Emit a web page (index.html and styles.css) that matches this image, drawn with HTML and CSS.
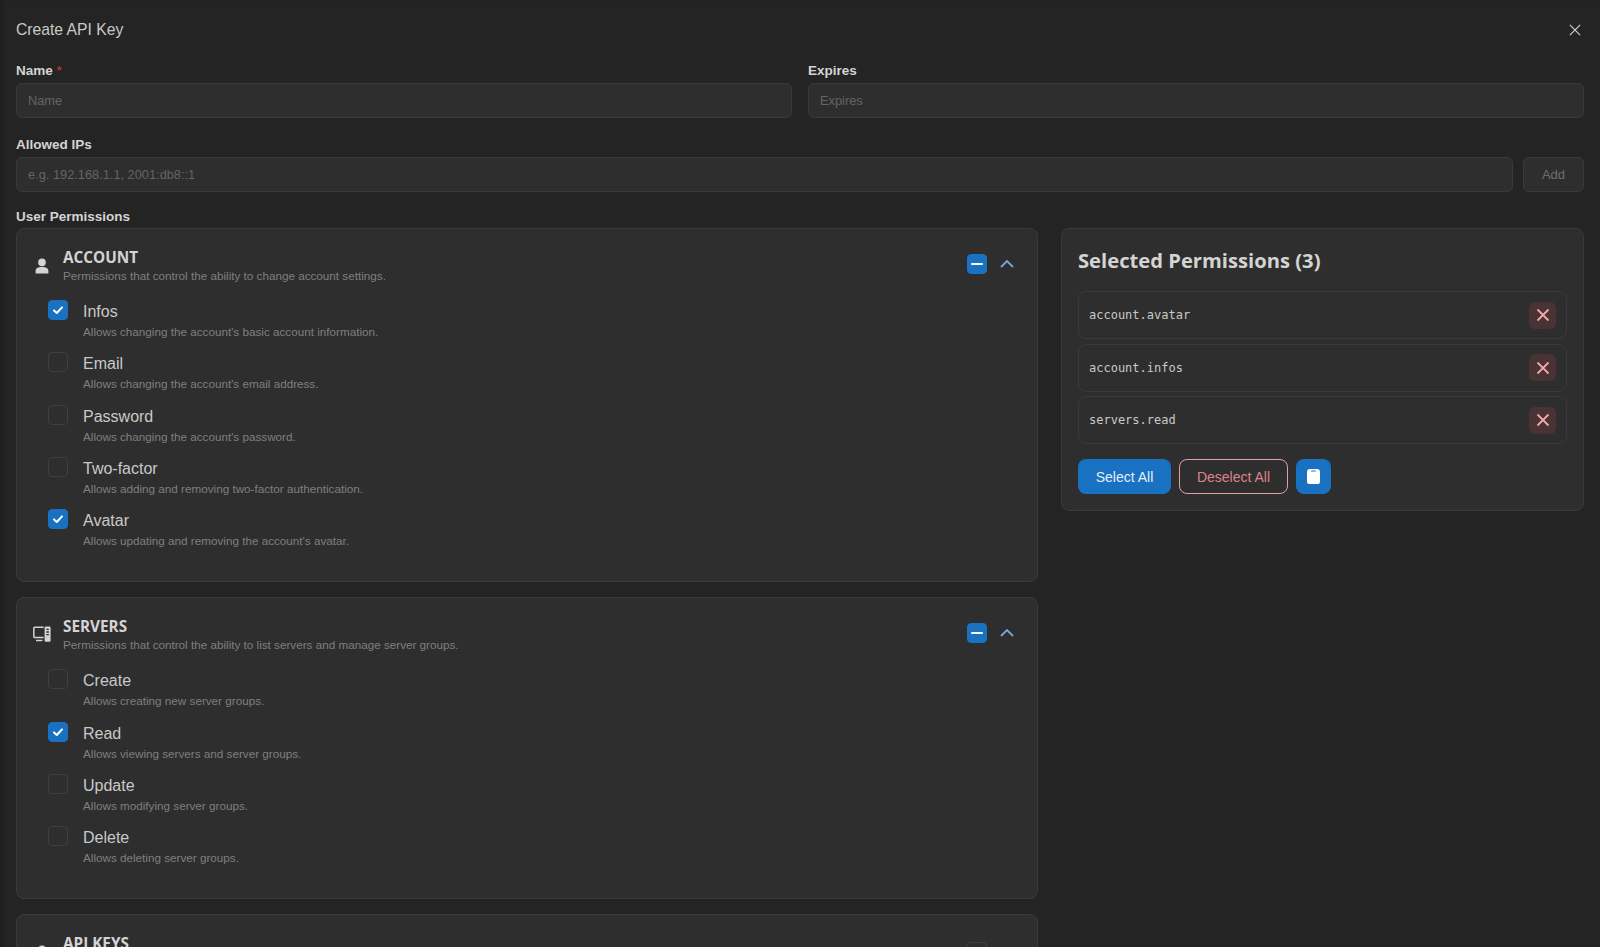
FILE: index.html
```html
<!DOCTYPE html>
<html lang="en">
<head>
    <meta charset="UTF-8">
    <title>Create API Key</title>
    <link rel="stylesheet" href="styles.css">
</head>
<body>
    <div class="modal">
        <div class="modal-header">
            <span class="modal-title">Create API Key</span>
            <svg class="close-icon" viewBox="0 0 14 14"><path d="M1 1 L13 13 M13 1 L1 13"/></svg>
        </div>

        <div class="field-row">
            <div class="field">
                <label class="field-label">Name <span class="required">*</span></label>
                <input class="text-input" type="text" placeholder="Name">
            </div>
            <div class="field">
                <label class="field-label">Expires</label>
                <input class="text-input" type="text" placeholder="Expires">
            </div>
        </div>

        <div class="field ip-field">
            <label class="field-label">Allowed IPs</label>
            <div class="ip-row">
                <input class="text-input" type="text" placeholder="e.g. 192.168.1.1, 2001:db8::1">
                <button class="add-button">Add</button>
            </div>
        </div>

        <div class="field-label permissions-label">User Permissions</div>
        <div class="permissions">
            <div class="groups">
                <!-- account -->
                <div class="group">
                    <div class="group-head">
                        <svg class="group-icon" viewBox="0 0 18 18"><circle cx="9" cy="5.4" r="3.8"/><path d="M2.6 16.5 V14 C2.6 11.4 5 10 9 10 C13 10 15.4 11.4 15.4 14 V16.5 Z"/></svg>
                        <div class="group-text">
                            <div class="group-title">ACCOUNT</div>
                            <div class="desc">Permissions that control the ability to change account settings.</div>
                        </div>
                        <span class="checkbox checked"><svg viewBox="0 0 20 20"><path class="minus" d="M5 10 H15"/></svg></span>
                        <svg class="chevron" viewBox="0 0 16 10"><path d="M2 8 L8 2 L14 8"/></svg>
                    </div>
                    <div class="perm">
                        <span class="checkbox checked"><svg viewBox="0 0 20 20"><path class="tick" d="M6 10.4 L8.8 13 L14 7.4"/></svg></span>
                        <div><div class="perm-name">Infos</div><div class="desc">Allows changing the account's basic account information.</div></div>
                    </div>
                    <div class="perm">
                        <span class="checkbox"></span>
                        <div><div class="perm-name">Email</div><div class="desc">Allows changing the account's email address.</div></div>
                    </div>
                    <div class="perm">
                        <span class="checkbox"></span>
                        <div><div class="perm-name">Password</div><div class="desc">Allows changing the account's password.</div></div>
                    </div>
                    <div class="perm">
                        <span class="checkbox"></span>
                        <div><div class="perm-name">Two-factor</div><div class="desc">Allows adding and removing two-factor authentication.</div></div>
                    </div>
                    <div class="perm">
                        <span class="checkbox checked"><svg viewBox="0 0 20 20"><path class="tick" d="M6 10.4 L8.8 13 L14 7.4"/></svg></span>
                        <div><div class="perm-name">Avatar</div><div class="desc">Allows updating and removing the account's avatar.</div></div>
                    </div>
                </div>

                <!-- servers -->
                <div class="group">
                    <div class="group-head">
                        <svg class="group-icon" viewBox="0 0 18 18"><path class="outline" d="M10.6 1.2 H1.8 A1 1 0 0 0 0.8 2.2 V10.4 A1 1 0 0 0 1.8 11.4 H10.6 M3 14.4 H9.4"/><rect x="11.6" y="0.6" width="6" height="15.2" rx="1.2"/><path class="notch" d="M13.4 3.4 H15.8 M13.4 6 H15.8 M13.4 8.6 H15.8"/></svg>
                        <div class="group-text">
                            <div class="group-title">SERVERS</div>
                            <div class="desc">Permissions that control the ability to list servers and manage server groups.</div>
                        </div>
                        <span class="checkbox checked"><svg viewBox="0 0 20 20"><path class="minus" d="M5 10 H15"/></svg></span>
                        <svg class="chevron" viewBox="0 0 16 10"><path d="M2 8 L8 2 L14 8"/></svg>
                    </div>
                    <div class="perm">
                        <span class="checkbox"></span>
                        <div><div class="perm-name">Create</div><div class="desc">Allows creating new server groups.</div></div>
                    </div>
                    <div class="perm">
                        <span class="checkbox checked"><svg viewBox="0 0 20 20"><path class="tick" d="M6 10.4 L8.8 13 L14 7.4"/></svg></span>
                        <div><div class="perm-name">Read</div><div class="desc">Allows viewing servers and server groups.</div></div>
                    </div>
                    <div class="perm">
                        <span class="checkbox"></span>
                        <div><div class="perm-name">Update</div><div class="desc">Allows modifying server groups.</div></div>
                    </div>
                    <div class="perm">
                        <span class="checkbox"></span>
                        <div><div class="perm-name">Delete</div><div class="desc">Allows deleting server groups.</div></div>
                    </div>
                </div>

                <!-- api keys, cut off by the window -->
                <div class="group">
                    <div class="group-head">
                        <svg class="group-icon" viewBox="0 0 18 18"><circle cx="9" cy="5.4" r="3.8"/><path d="M2.6 16.5 V14 C2.6 11.4 5 10 9 10 C13 10 15.4 11.4 15.4 14 V16.5 Z"/></svg>
                        <div class="group-text tall">
                            <div class="group-title">API KEYS</div>
                        </div>
                        <span class="checkbox"></span>
                    </div>
                </div>
            </div>

            <div class="selected">
                <h2 class="selected-title">Selected Permissions (3)</h2>
                <div class="selected-list">
                    <div class="selected-item">
                        <span class="perm-code">account.avatar</span>
                        <span class="remove"><svg viewBox="0 0 14 14"><path d="M1.5 1.5 L12.5 12.5 M12.5 1.5 L1.5 12.5"/></svg></span>
                    </div>
                    <div class="selected-item">
                        <span class="perm-code">account.infos</span>
                        <span class="remove"><svg viewBox="0 0 14 14"><path d="M1.5 1.5 L12.5 12.5 M12.5 1.5 L1.5 12.5"/></svg></span>
                    </div>
                    <div class="selected-item">
                        <span class="perm-code">servers.read</span>
                        <span class="remove"><svg viewBox="0 0 14 14"><path d="M1.5 1.5 L12.5 12.5 M12.5 1.5 L1.5 12.5"/></svg></span>
                    </div>
                </div>
                <div class="actions">
                    <button class="btn btn-primary">Select All</button>
                    <button class="btn btn-outline">Deselect All</button>
                    <button class="btn btn-icon"><svg viewBox="0 0 13 15"><path fill-rule="evenodd" d="M3 0 H10 A3 3 0 0 1 13 3 V13 A2 2 0 0 1 11 15 H2 A2 2 0 0 1 0 13 V3 A3 3 0 0 1 3 0 Z M4.6 1.4 A0.6 0.6 0 0 0 4.6 2.6 H8.4 A0.6 0.6 0 0 0 8.4 1.4 Z"/></svg></button>
                </div>
            </div>
        </div>
    </div>
</body>
</html>
```

FILE: styles.css
```css
html, body {
    height: 100%;
}
body {
    margin: 0;
    background: #242424;
    color: #d4d4d4;
    font-family: "Liberation Sans", Arial, sans-serif;
    overflow: hidden;
}
.modal {
    height: 947px;
    box-sizing: border-box;
    padding: 0 16px;
    overflow: hidden;
    box-shadow: inset 5px 0 6px -4px #1a1a1a;
}
.modal-header {
    display: flex;
    align-items: center;
    justify-content: space-between;
    height: 61px;
    padding-bottom: 2px;
    box-sizing: border-box;
}
.modal-title {
    font-size: 15.7px;
    color: #c9c9c9;
}
.close-icon {
    width: 12px;
    height: 12px;
    margin-right: 3px;
    fill: none;
    stroke: #c9c9c9;
    stroke-width: 1.5;
}

/* form fields */
.field-row {
    display: grid;
    grid-template-columns: 1fr 1fr;
    gap: 16px;
}
.field-label {
    display: block;
    font-size: 13.5px;
    font-weight: 700;
    line-height: 20px;
    color: #d4d4d4;
}
.required {
    color: #e03131;
    font-weight: 400;
}
.text-input {
    display: block;
    width: 100%;
    height: 35px;
    margin-top: 2px;
    padding: 0 11px;
    box-sizing: border-box;
    background: #2e2e2e;
    border: 1px solid #3a3a3a;
    border-radius: 6px;
    font-family: inherit;
    font-size: 12.8px;
    color: #d4d4d4;
    outline: none;
}
.text-input::placeholder {
    color: #646464;
}
.ip-field {
    margin-top: 17px;
}
.ip-row {
    display: flex;
    gap: 10px;
    align-items: flex-end;
}
.ip-row .text-input {
    flex: 1;
}
.add-button {
    width: 61px;
    height: 35px;
    background: #2e2e2e;
    border: 1px solid #3a3a3a;
    border-radius: 6px;
    font-family: inherit;
    font-size: 13px;
    color: #6e6e6e;
}
.permissions-label {
    margin-top: 15px;
}
.permissions {
    display: grid;
    grid-template-columns: 1022px 523px;
    gap: 23px;
    align-items: start;
    margin-top: 1px;
}

/* permission groups */
.groups {
    display: flex;
    flex-direction: column;
    gap: 15px;
}
.group {
    background: #2e2e2e;
    border: 1px solid #3a3a3a;
    border-radius: 8px;
    padding: 18px 22px 18px 16px;
}
.group-head {
    display: flex;
    align-items: center;
    margin-bottom: 18px;
}
.group-icon {
    width: 18px;
    height: 18px;
    margin-right: 12px;
    fill: #d4d4d4;
    flex-shrink: 0;
}
.group-icon .outline {
    fill: none;
    stroke: #d4d4d4;
    stroke-width: 1.5;
}
.group-icon .notch {
    fill: none;
    stroke: #2e2e2e;
    stroke-width: 1.3;
}
.group-text {
    flex: 1;
}
.group-text.tall {
    min-height: 40px;
}
.group-text.tall + .checkbox {
    margin-right: 28px;
}
.group-title {
    font-family: "Open Sans", sans-serif;
    font-size: 15.3px;
    font-weight: 700;
    line-height: 20px;
    margin-bottom: 1px;
    color: #d4d4d4;
}
.desc {
    font-size: 11.7px;
    line-height: 16px;
    color: #7f7f7f;
}
.checkbox {
    display: block;
    width: 20px;
    height: 20px;
    box-sizing: border-box;
    border: 1px solid #3f3f3f;
    border-radius: 4px;
    flex-shrink: 0;
}
.group-head .checkbox {
    margin-bottom: 3px;
}
.checkbox.checked {
    background: #1971c2;
    border-color: #1971c2;
}
.checkbox svg {
    display: block;
    width: 20px;
    height: 20px;
    margin: -1px;
    fill: none;
    stroke: #fff;
    stroke-width: 2;
    stroke-linecap: round;
    stroke-linejoin: round;
}
.chevron {
    width: 16px;
    height: 10px;
    margin-left: 12px;
    margin-bottom: 4px;
    fill: none;
    stroke: #74a9d8;
    stroke-width: 1.8;
}
.perm {
    display: flex;
    gap: 15px;
    height: 52.25px;
    padding-left: 15px;
}
.perm .checkbox {
    margin-top: -2px;
}
.perm-name {
    font-size: 16px;
    line-height: 20px;
    margin-bottom: 2px;
    color: #c9c9c9;
}

/* selected panel */
.selected {
    background: #2e2e2e;
    border: 1px solid #3a3a3a;
    border-radius: 8px;
    padding: 16px 16px 16px;
}
.selected-title {
    margin: 0 0 16px;
    font-family: "Open Sans", sans-serif;
    font-size: 20.2px;
    font-weight: 700;
    line-height: 30px;
    color: #d4d4d4;
}
.selected-list {
    display: flex;
    flex-direction: column;
    gap: 4.5px;
}
.selected-item {
    display: flex;
    align-items: center;
    justify-content: space-between;
    height: 48px;
    box-sizing: border-box;
    padding: 0 10px;
    border: 1px solid #3a3a3a;
    border-radius: 8px;
}
.perm-code {
    font-family: "DejaVu Sans Mono", monospace;
    font-size: 12px;
    color: #c9c9c9;
}
.remove {
    display: flex;
    align-items: center;
    justify-content: center;
    width: 27px;
    height: 27px;
    background: #4a3335;
    border-radius: 6px;
}
.remove svg {
    width: 14px;
    height: 14px;
    fill: none;
    stroke: #f1a7ab;
    stroke-width: 1.8;
}
.actions {
    display: flex;
    gap: 8px;
    margin-top: 15px;
}
.btn {
    height: 35px;
    box-sizing: border-box;
    border-radius: 8px;
    font-family: inherit;
    font-size: 14px;
    padding: 0;
}
.btn-primary {
    width: 93px;
    background: #1971c2;
    border: none;
    color: #e4effa;
}
.btn-outline {
    width: 109px;
    background: transparent;
    border: 1px solid #e3a0a4;
    color: #dc8489;
}
.btn-icon {
    display: flex;
    align-items: center;
    justify-content: center;
    width: 35px;
    background: #1971c2;
    border: none;
}
.btn-icon svg {
    width: 13px;
    height: 15px;
    fill: #fff;
}
```
